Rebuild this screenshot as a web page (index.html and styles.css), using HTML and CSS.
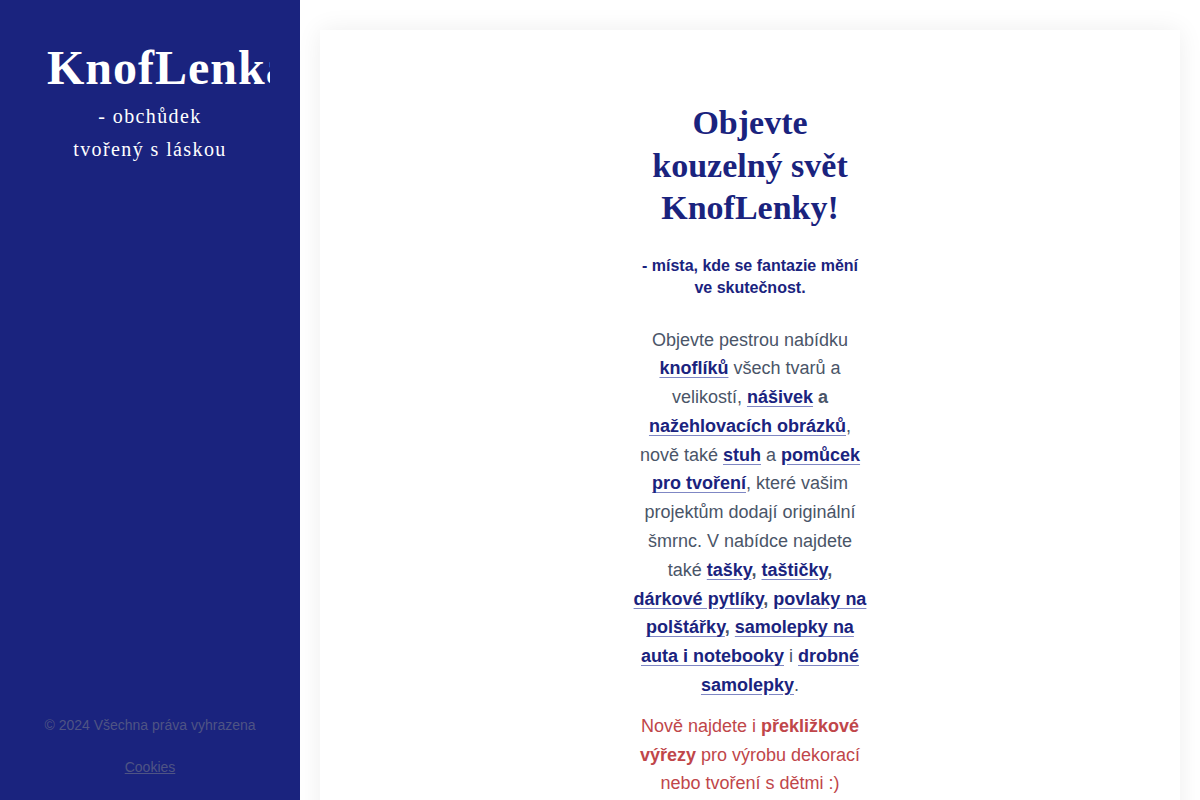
FILE: index.html
```html
<!DOCTYPE html>
<html lang="cs">
<head>
<meta charset="utf-8">
<title>KnofLenka</title>
<link rel="stylesheet" href="styles.css">
</head>
<body>
<div class="layout">
  <aside class="sidebar">
    <div class="brand">
      <h1 class="logo">KnofLenka</h1>
      <p class="tagline">- obchůdek<br>tvořený s láskou</p>
    </div>
    <footer class="side-footer">
      <p class="copy">© 2024 Všechna práva vyhrazena</p>
      <a class="cookies" href="#">Cookies</a>
    </footer>
  </aside>
  <main class="main">
    <section class="card">
      <div class="intro">
        <h2 class="headline">Objevte kouzelný svět KnofLenky!</h2>
        <p class="lead">- místa, kde se fantazie mění ve skutečnost.</p>
        <p class="text">Objevte pestrou nabídku <b><a href="#">knoflíků</a></b> všech tvarů a velikostí, <b><a href="#">nášivek</a> a <a href="#">nažehlovacích obrázků</a></b>, nově také <b><a href="#">stuh</a></b> a <b><a href="#">pomůcek pro tvoření</a></b>, které vašim projektům dodají originální šmrnc. V nabídce najdete také <b><a href="#">tašky</a>, <a href="#">taštičky</a>, <a href="#">dárkové pytlíky</a>, <a href="#">povlaky na polštářky</a>, <a href="#">samolepky na auta i notebooky</a></b> i <b><a href="#">drobné samolepky</a></b>.</p>
        <p class="news">Nově najdete i <b>překližkové výřezy</b> pro výrobu dekorací nebo tvoření s dětmi :)</p>
      </div>
    </section>
  </main>
</div>
</body>
</html>
```

FILE: styles.css
```css
html, body {
  margin: 0;
  padding: 0;
  height: 100%;
  overflow: hidden;
}
body {
  background: #ffffff;
  font-family: "Liberation Sans", Arial, sans-serif;
}
.layout {
  display: flex;
  height: 800px;
}
.sidebar {
  width: 300px;
  flex: 0 0 300px;
  background: #1a237e;
  color: #ffffff;
  display: flex;
  flex-direction: column;
  justify-content: space-between;
  box-sizing: border-box;
  padding: 40px 30px 24px;
}
.brand {
  text-align: center;
  overflow: hidden;
}
.logo {
  margin: 0;
  font-family: "Liberation Serif", "Times New Roman", serif;
  font-weight: bold;
  font-size: 48px;
  line-height: 56px;
  letter-spacing: 1px;
  white-space: nowrap;
  text-align: left;
  padding-left: 17px;
  overflow: hidden;
}
.tagline {
  margin: 4px 0 0;
  font-family: "Liberation Serif", "Times New Roman", serif;
  font-size: 20px;
  line-height: 33px;
  letter-spacing: 1.4px;
}
.side-footer {
  text-align: center;
  color: #4f5484;
  font-size: 14px;
}
.copy {
  margin: 0 0 24px;
  line-height: 18px;
}
.cookies {
  color: #4f5484;
  text-decoration: underline;
  line-height: 18px;
}
.main {
  flex: 1;
  padding: 30px 20px 0;
  background: #ffffff;
}
.card {
  background: #ffffff;
  box-shadow: 0 0 24px rgba(0, 0, 0, 0.07);
  min-height: 900px;
  padding-top: 72px;
  box-sizing: border-box;
}
.intro {
  width: 236px;
  margin: 0 auto;
  text-align: center;
}
.headline {
  margin: 0;
  font-family: "Liberation Serif", "Times New Roman", serif;
  font-weight: bold;
  font-size: 34px;
  line-height: 42.5px;
  color: #1a237e;
}
.lead {
  margin: 25px 0 0;
  font-weight: bold;
  font-size: 16px;
  line-height: 22px;
  color: #1a237e;
}
.text {
  margin: 27px 0 0;
  font-size: 18px;
  line-height: 28.8px;
  color: #4a5568;
}
.text b {
  color: #4a5568;
}
.text a {
  color: #1a237e;
  font-weight: bold;
  text-decoration: underline;
  text-decoration-color: #7f87c4;
  text-underline-offset: 3px;
}
.news {
  margin: 12px 0 0;
  font-size: 18px;
  line-height: 28.8px;
  color: #c0464a;
}
```
